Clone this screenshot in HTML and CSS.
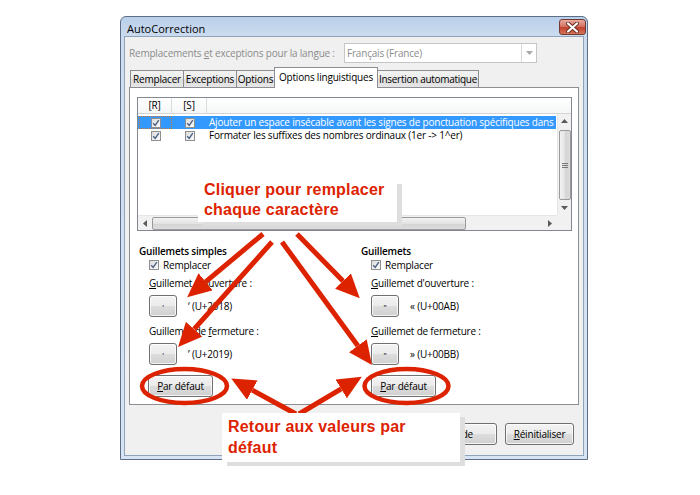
FILE: index.html
```html
<!DOCTYPE html>
<html lang="fr">
<head>
    <meta charset="UTF-8">
    <title>AutoCorrection</title>
    <link rel="stylesheet" href="styles.css">
</head>
<body>
<div class="stage">
    <div class="dialog">
        <div class="titlebar">
            <span class="title">AutoCorrection</span>
            <span class="close-btn">
                <svg width="13" height="11" viewBox="0 0 13 11"><path d="M2,1.5 L11,9.5 M11,1.5 L2,9.5" stroke="#6b2a22" stroke-width="4" stroke-linecap="round"/><path d="M2,1.5 L11,9.5 M11,1.5 L2,9.5" stroke="#fff" stroke-width="2.2" stroke-linecap="round"/></svg>
            </span>
        </div>
        <div class="client">
            <div class="lang-row">
                <span class="lang-label">Remplacements <u>e</u>t exceptions pour la langue :</span>
                <div class="combo">
                    <span class="combo-text">Français (France)</span>
                    <span class="combo-btn"><svg width="7" height="4" viewBox="0 0 7 4"><path d="M0,0 L7,0 L3.5,4 z" fill="#a8a8a8"/></svg></span>
                </div>
            </div>

            <div class="tabs">
                <span class="tab tab-1">Remplacer</span>
                <span class="tab tab-2">Exceptions</span>
                <span class="tab tab-3">Options</span>
                <span class="tab tab-4 active">Options linguistiques</span>
                <span class="tab tab-5">Insertion automatique</span>
            </div>

            <div class="panel">
                <div class="listbox">
                    <div class="list-head">
                        <span class="col-r">[R]</span>
                        <span class="col-s">[S]</span>
                        <span class="col-t"></span>
                    </div>
                    <div class="list-body">
                        <div class="row selected">
                            <span class="col-r focus"><span class="cb"><svg width="8" height="8" viewBox="0 0 8 8"><path d="M1.2,4.2 L3.2,6.4 L6.8,1.2" stroke="#4d6185" stroke-width="1.4" fill="none"/></svg></span></span>
                            <span class="col-s"><span class="cb"><svg width="8" height="8" viewBox="0 0 8 8"><path d="M1.2,4.2 L3.2,6.4 L6.8,1.2" stroke="#4d6185" stroke-width="1.4" fill="none"/></svg></span></span>
                            <span class="col-t">Ajouter un espace insécable avant les signes de ponctuation spécifiques dans le texte</span>
                        </div>
                        <div class="row">
                            <span class="col-r"><span class="cb"><svg width="8" height="8" viewBox="0 0 8 8"><path d="M1.2,4.2 L3.2,6.4 L6.8,1.2" stroke="#4d6185" stroke-width="1.4" fill="none"/></svg></span></span>
                            <span class="col-s"><span class="cb"><svg width="8" height="8" viewBox="0 0 8 8"><path d="M1.2,4.2 L3.2,6.4 L6.8,1.2" stroke="#4d6185" stroke-width="1.4" fill="none"/></svg></span></span>
                            <span class="col-t">Formater les suffixes des nombres ordinaux (1er -&gt; 1^er)</span>
                        </div>
                    </div>
                    <div class="vscroll">
                        <span class="sb-arrow"><svg width="7" height="4" viewBox="0 0 7 4"><path d="M0,4 L7,4 L3.5,0 z" fill="#5a5a5a"/></svg></span>
                        <span class="vthumb"><span class="grip-v"></span></span>
                        <span class="sb-arrow"><svg width="7" height="4" viewBox="0 0 7 4"><path d="M0,0 L7,0 L3.5,4 z" fill="#5a5a5a"/></svg></span>
                    </div>
                    <div class="hscroll">
                        <span class="sb-arrow"><svg width="4" height="7" viewBox="0 0 4 7"><path d="M4,0 L4,7 L0,3.5 z" fill="#5a5a5a"/></svg></span>
                        <span class="hthumb"><span class="grip-h"></span></span>
                        <span class="sb-arrow"><svg width="4" height="7" viewBox="0 0 4 7"><path d="M0,0 L0,7 L4,3.5 z" fill="#5a5a5a"/></svg></span>
                    </div>
                    <div class="corner"></div>
                </div>

                <div class="quotes">
                    <div class="quote-group">
                        <div class="group-title">Guillemets simples</div>
                        <div class="check-line"><span class="cb"><svg width="8" height="8" viewBox="0 0 8 8"><path d="M1.2,4.2 L3.2,6.4 L6.8,1.2" stroke="#4d6185" stroke-width="1.4" fill="none"/></svg></span>Remplacer</div>
                        <div class="field-label"><u>G</u>uillemet d'ouverture :</div>
                        <div class="char-line"><span class="btn char-btn">'</span><span class="char-name">‘ (U+2018)</span></div>
                        <div class="field-label">Guillemet de <u>f</u>ermeture :</div>
                        <div class="char-line"><span class="btn char-btn">'</span><span class="char-name">’ (U+2019)</span></div>
                        <span class="btn default-btn"><u>P</u>ar défaut</span>
                    </div>
                    <div class="quote-group">
                        <div class="group-title">Guillemets</div>
                        <div class="check-line"><span class="cb"><svg width="8" height="8" viewBox="0 0 8 8"><path d="M1.2,4.2 L3.2,6.4 L6.8,1.2" stroke="#4d6185" stroke-width="1.4" fill="none"/></svg></span>Remplacer</div>
                        <div class="field-label"><u>G</u>uillemet d'ouverture :</div>
                        <div class="char-line"><span class="btn char-btn">"</span><span class="char-name">« (U+00AB)</span></div>
                        <div class="field-label"><u>G</u>uillemet de fermeture :</div>
                        <div class="char-line"><span class="btn char-btn">"</span><span class="char-name">» (U+00BB)</span></div>
                        <span class="btn default-btn"><u>P</u>ar défaut</span>
                    </div>
                </div>
            </div>

            <div class="buttons">
                <span class="btn dlg-btn help-btn"><span class="help-text"><u>A</u>ide</span></span>
                <span class="btn dlg-btn"><u>R</u>éinitialiser</span>
            </div>
        </div>
    </div>

    <!-- annotations drawn over the screenshot -->
    <svg class="marks" width="700" height="495" viewBox="0 0 700 495">
        <defs>
            <marker id="head" viewBox="0 -11 24 22" markerWidth="24" markerHeight="22" refX="0" refY="0" orient="auto" markerUnits="userSpaceOnUse">
                <path d="M0,-11 L24,0 L0,11 z" fill="#dd2200"/>
            </marker>
        </defs>
        <g stroke="#dd2200" stroke-width="5" fill="none">
            <line x1="263" y1="234" x2="205.6" y2="281.8" marker-end="url(#head)"/>
            <line x1="272" y1="242" x2="194.1" y2="329.2" marker-end="url(#head)"/>
            <line x1="297" y1="234" x2="343" y2="281" marker-end="url(#head)"/>
            <line x1="282" y1="242" x2="357.8" y2="345.7" marker-end="url(#head)"/>
            <line x1="296" y1="414" x2="252.3" y2="390.1" marker-end="url(#head)"/>
            <line x1="299" y1="414" x2="341.2" y2="388.9" marker-end="url(#head)"/>
            <ellipse cx="184.5" cy="386" rx="42.5" ry="17" stroke-width="4.5"/>
            <ellipse cx="406.5" cy="386" rx="42" ry="17" stroke-width="4.5"/>
        </g>
    </svg>

    <div class="callout callout-top">Cliquer pour remplacer<br>chaque caractère</div>
    <div class="callout callout-bottom">Retour aux valeurs par<br>défaut</div>
</div>
</body>
</html>
```

FILE: styles.css
```css
* { box-sizing: border-box; }
body {
    margin: 0;
    background: #fff;
    font-family: "Open Sans", "Liberation Sans", sans-serif;
    font-size: 10px;
    letter-spacing: -0.2px;
    color: #000;
}
u { text-decoration: underline; text-underline-offset: 1px; }
.stage {
    position: relative;
    width: 700px;
    height: 495px;
    overflow: hidden;
}

/* window frame */
.dialog {
    margin: 16px 0 0 120px;
    width: 468px;
    height: 444px;
    border: 1px solid #5d6f86;
    border-radius: 6px 6px 0 0;
    background: linear-gradient(#b9cfea, #cddcef 20px, #d7e4f3);
    padding: 0 3px 3px;
    display: flex;
    flex-direction: column;
}
.titlebar {
    height: 19px;
    display: flex;
    align-items: flex-start;
    justify-content: space-between;
    padding: 0 0 0 3px;
}
.title { font-size: 11px; line-height: 23px; letter-spacing: 0; }
.close-btn {
    width: 27px;
    height: 16px;
    margin-top: 2px;
    margin-right: -2px;
    border: 1px solid #733a33;
    border-radius: 3px;
    background: linear-gradient(#e7aa9e, #d47564 45%, #c2402c 55%, #d6765a);
    display: flex;
    align-items: center;
    justify-content: center;
}
.client {
    flex: 1;
    border: 1px solid #8fa3bb;
    background: #f0f0f0;
    display: flex;
    flex-direction: column;
}

/* language row */
.lang-row {
    margin-top: 6px;
    padding-left: 4px;
    height: 20px;
    display: flex;
    align-items: center;
    justify-content: space-between;
}
.lang-label { color: #8c8c8c; }
.combo {
    width: 193px;
    height: 20px;
    margin-right: 46px;
    border: 1px solid #c6c6c6;
    background: #fff;
    display: flex;
    align-items: center;
}
.combo-text { flex: 1; padding-left: 2px; color: #8c8c8c; }
.combo-btn {
    width: 15px;
    height: 18px;
    border-left: 1px solid #dadada;
    display: flex;
    align-items: center;
    justify-content: center;
}

/* tabs */
.tabs {
    margin: 4px 0 0 5px;
    height: 20px;
    display: flex;
    align-items: flex-end;
    position: relative;
    z-index: 1;
}
.tab {
    height: 17px;
    margin-left: -1px;
    border: 1px solid #8c8e94;
    border-bottom: none;
    background: linear-gradient(#f3f3f3, #ebebeb 50%, #dedede 51%, #e6e6e6);
    text-align: center;
    line-height: 16px;
    white-space: nowrap;
    overflow: hidden;
}
.tab-1 { width: 54px; margin-left: 0; }
.tab-2 { width: 54px; }
.tab-3 { width: 39px; }
.tab-4 { width: 104px; }
.tab-5 { width: 102px; letter-spacing: -0.3px; }
.tab.active {
    height: 21px;
    margin-bottom: -1px;
    background: #fff;
    line-height: 18px;
    position: relative;
    z-index: 2;
}

/* tab page */
.panel {
    margin-left: 4px;
    width: 450px;
    height: 318px;
    border: 1px solid #8c8e94;
    background: #fff;
    padding: 9px 6px 0 7px;
}
.listbox {
    height: 134px;
    border: 1px solid #828790;
    display: grid;
    grid-template-columns: 1fr 14px;
    grid-template-rows: 16px 1fr 15px;
}
.list-head {
    grid-column: 1 / 3;
    display: flex;
    border-bottom: 1px solid #d5d5d5;
    background: linear-gradient(#fff, #f5f6f7);
    line-height: 15px;
}
.col-r { width: 34px; flex: none; text-align: center; }
.col-s { width: 35px; flex: none; text-align: center; }
.col-t { flex: 1; white-space: nowrap; overflow: hidden; padding-left: 1px; }
.list-head .col-r, .list-head .col-s { border-right: 1px solid #dcdcdc; }
.list-body { padding-top: 2px; overflow: hidden; }
.row {
    height: 13px;
    display: flex;
    align-items: center;
    line-height: 13px;
    margin-right: 1px;
}
.row .col-r, .row .col-s {
    display: flex;
    justify-content: center;
    align-items: center;
    height: 13px;
}
.row .col-r { width: 33px; margin-left: 1px; }
.row .col-s { width: 36px; }
.row.selected { background: #3399ff; color: #fff; }
.row .focus { outline: 1px dotted #c9793a; outline-offset: -1px; }

.cb {
    width: 10px;
    height: 10px;
    border: 1px solid #8f8f8f;
    background: linear-gradient(135deg, #dcdcdc, #fbfbfb);
    display: inline-flex;
    align-items: center;
    justify-content: center;
    flex: none;
}

/* scroll bars */
.vscroll, .hscroll, .corner { background: #f1f1f1; }
.vscroll {
    display: flex;
    flex-direction: column;
    align-items: center;
    border-left: 1px solid #e6e6e6;
}
.hscroll {
    display: flex;
    align-items: center;
    border-top: 1px solid #e6e6e6;
}
.sb-arrow {
    width: 14px;
    height: 14px;
    flex: none;
    display: flex;
    align-items: center;
    justify-content: center;
}
.vthumb {
    width: 12px;
    height: 70px;
    margin: 2px 0 auto;
    border: 1px solid #9a9a9a;
    border-radius: 2px;
    background: linear-gradient(90deg, #f2f2f2, #e3e3e3 50%, #d4d4d4 51%, #dcdcdc);
    display: flex;
    align-items: center;
    justify-content: center;
}
.hthumb {
    width: 314px;
    height: 13px;
    margin-right: auto;
    border: 1px solid #9a9a9a;
    border-radius: 2px;
    background: linear-gradient(#f2f2f2, #e3e3e3 50%, #d4d4d4 51%, #dcdcdc);
    display: flex;
    align-items: center;
    justify-content: center;
}
.grip-v {
    width: 6px;
    height: 5px;
    border-top: 1px solid #777;
    border-bottom: 1px solid #777;
    background: linear-gradient(transparent 1px, #777 1px, #777 2px, transparent 2px);
}
.grip-h {
    width: 5px;
    height: 6px;
    border-left: 1px solid #777;
    border-right: 1px solid #777;
    background: linear-gradient(90deg, transparent 1px, #777 1px, #777 2px, transparent 2px);
}

/* quotes */
.quotes {
    margin-top: 13px;
    padding-left: 2px;
    display: grid;
    grid-template-columns: 222px 1fr;
}
.quote-group { display: flex; flex-direction: column; align-items: flex-start; }
.group-title { font-weight: 600; line-height: 14px; }
.check-line {
    margin-left: 10px;
    height: 14px;
    display: flex;
    align-items: center;
    gap: 4px;
}
.field-label { margin: 4px 0 0 10px; line-height: 14px; }
.field-label + .char-line + .field-label { margin-top: 7px; }
.char-line {
    margin: 5px 0 0 10px;
    display: flex;
    align-items: center;
    gap: 11px;
}
.btn {
    height: 22px;
    border: 1px solid #707070;
    border-radius: 3px;
    background: linear-gradient(#f3f3f3, #ebebeb 50%, #dddddd 51%, #d0d0d0);
    box-shadow: inset 0 0 0 1px rgba(255, 255, 255, 0.75);
    display: inline-flex;
    align-items: center;
    justify-content: center;
}
.char-btn { width: 28px; font-size: 8px; }
.default-btn { width: 65px; margin: 10px 0 0 9px; }
.quote-group + .quote-group .default-btn { margin-left: 10px; }

/* dialog buttons */
.buttons {
    margin-top: 18px;
    padding-right: 9px;
    display: flex;
    justify-content: flex-end;
    gap: 8px;
}
.dlg-btn { width: 69px; }
.help-btn { width: 72px; justify-content: flex-end; padding-right: 23px; }

/* annotations */
.marks { position: absolute; left: 0; top: 0; }
.callout {
    position: absolute;
    background: #fff;
    box-shadow: 5px 4px 0 #dedede;
    font-family: "Liberation Sans", Arial, sans-serif;
    font-weight: bold;
    font-size: 16px;
    letter-spacing: 0.2px;
    color: #dd2200;
    padding-left: 6px;
}
.callout-top { left: 198px; top: 180px; width: 199px; height: 42px; line-height: 20px; }
.callout-bottom { left: 222px; top: 413px; width: 238px; height: 49px; line-height: 21px; padding-top: 3px; }
```
